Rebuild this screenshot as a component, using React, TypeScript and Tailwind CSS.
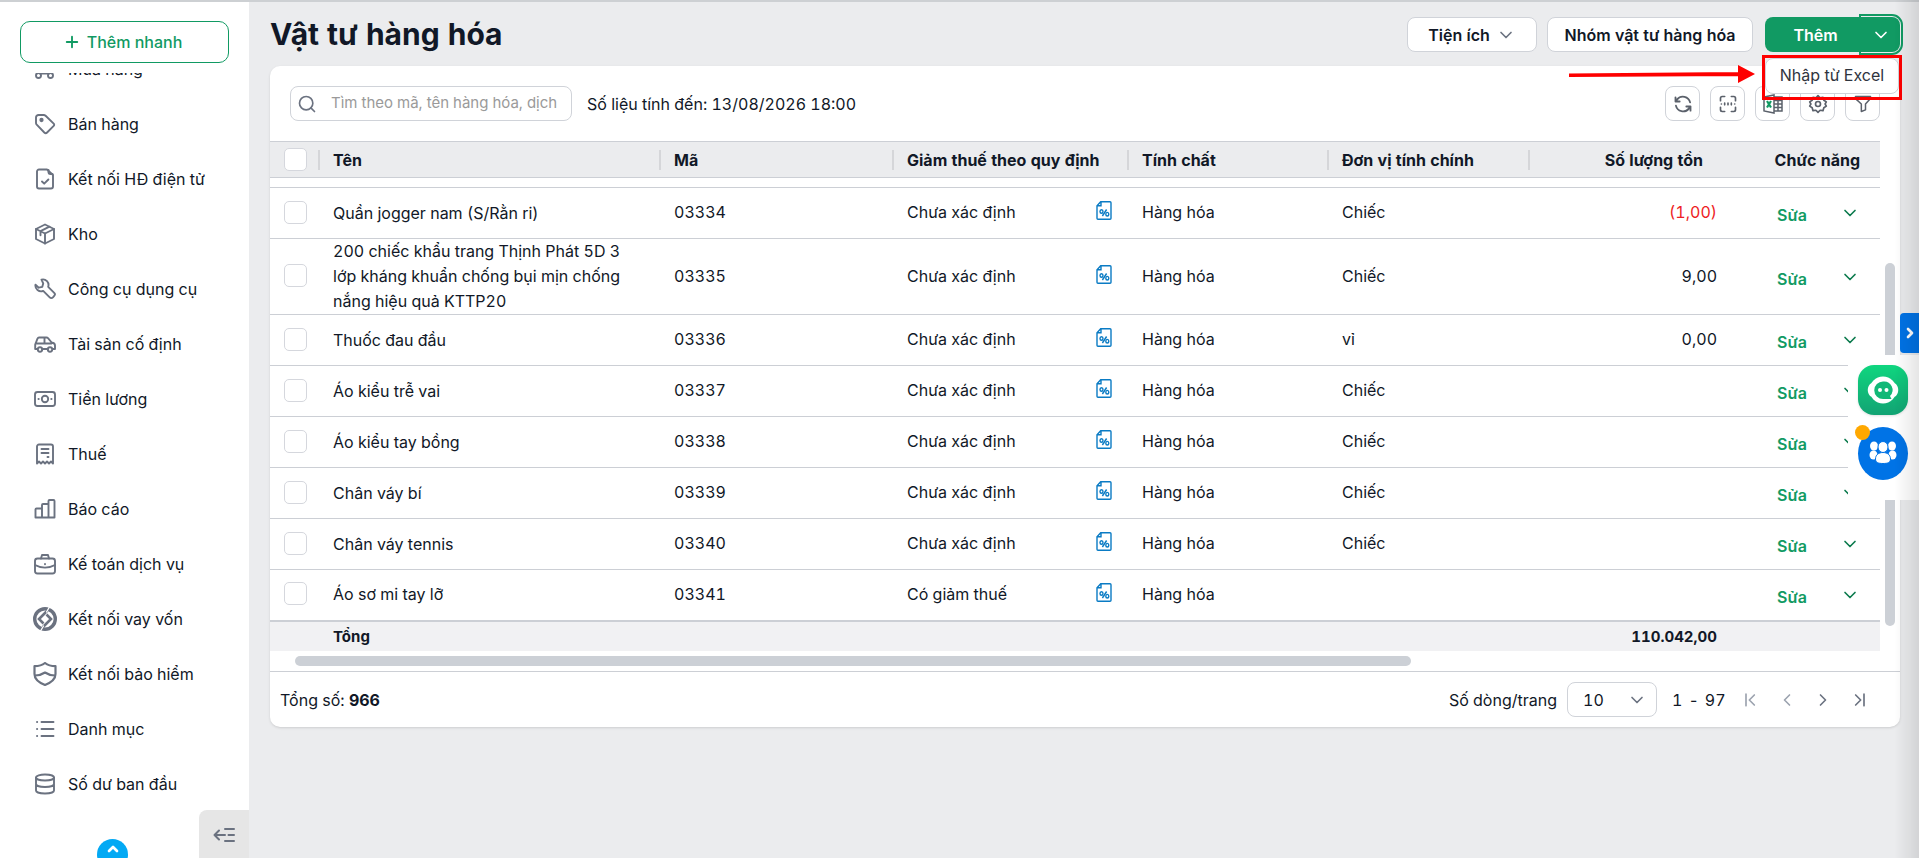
import { type ReactNode } from 'react';
import { ChevronDown, ChevronLeft, ChevronRight, ChevronUp, Plus, Search } from 'lucide-react';

type Item = {
  name: string;
  code: string;
  tax: string;
  unit: string;
  qty: string;
};

const items: Item[] = [
  { name: 'Quần jogger nam (S/Rằn ri)', code: '03334', tax: 'Chưa xác định', unit: 'Chiếc', qty: '(1,00)' },
  { name: '200 chiếc khẩu trang Thịnh Phát 5D 3 lớp kháng khuẩn chống bụi mịn chống nắng hiệu quả KTTP20', code: '03335', tax: 'Chưa xác định', unit: 'Chiếc', qty: '9,00' },
  { name: 'Thuốc đau đầu', code: '03336', tax: 'Chưa xác định', unit: 'vỉ', qty: '0,00' },
  { name: 'Áo kiểu trễ vai', code: '03337', tax: 'Chưa xác định', unit: 'Chiếc', qty: '' },
  { name: 'Áo kiểu tay bồng', code: '03338', tax: 'Chưa xác định', unit: 'Chiếc', qty: '' },
  { name: 'Chân váy bí', code: '03339', tax: 'Chưa xác định', unit: 'Chiếc', qty: '' },
  { name: 'Chân váy tennis', code: '03340', tax: 'Chưa xác định', unit: 'Chiếc', qty: '' },
  { name: 'Áo sơ mi tay lỡ', code: '03341', tax: 'Có giảm thuế', unit: '', qty: '' },
];

function Icon({ children, className = 'size-6' }: { children: ReactNode; className?: string }) {
  return (
    <svg
      viewBox="0 0 24 24"
      fill="none"
      stroke="currentColor"
      strokeWidth="1.9"
      strokeLinecap="round"
      strokeLinejoin="round"
      aria-hidden="true"
      className={className}
    >
      {children}
    </svg>
  );
}

const menu: { label: string; icon: ReactNode }[] = [
  {
    label: 'Mua hàng',
    icon: (
      <>
        <path d="M2 5h3l2.500 11h10l2-8H6" />
        <circle cx="5.500" cy="18.500" r="2.500" />
        <circle cx="17.500" cy="18.500" r="2.500" />
        <path d="M7.500 16.500h8" />
      </>
    ),
  },
  {
    label: 'Bán hàng',
    icon: (
      <>
        <path d="M3 5.500A2.500 2.500 0 0 1 5.500 3h5.300c.7 0 1.300.3 1.800.7l8.100 7.900a1.600 1.600 0 0 1 0 2.300l-6.600 6.600a2 2 0 0 1-2.800 0L3.700 12.700A2.400 2.400 0 0 1 3 11z" />
        <circle cx="8.500" cy="8" r="1.200" fill="currentColor" />
      </>
    ),
  },
  {
    label: 'Kết nối HĐ điện tử',
    icon: (
      <>
        <path d="M14 2.500H6a2 2 0 0 0-2 2v15a2 2 0 0 0 2 2h12a2 2 0 0 0 2-2V8z" />
        <path d="M15.500 3v2.500a1.500 1.500 0 0 0 1.500 1.500h2.500" />
        <path d="m9 14.500 2.200 2.200 4.200-4.200" />
      </>
    ),
  },
  {
    label: 'Kho',
    icon: (
      <>
        <path d="M12 2.500 3 7v10l9 4.500L21 17V7z" />
        <path d="m3 7 9 4.500L21 7M12 11.500v10M7.500 9.200l9-4.500M7.500 9.200v4" />
      </>
    ),
  },
  {
    label: 'Công cụ dụng cụ',
    icon: (
      <path d="M8.500 2.600a5.600 5.600 0 0 1 6.700 7.200l6 6a2.200 2.200 0 0 1 0 3.100l-1.300 1.500a2.200 2.200 0 0 1-3.200 0l-6.500-6.500a5.700 5.700 0 0 1-7.700-6.300l3.200 3.100 3.600-.9.900-3.400z" />
    ),
  },
  {
    label: 'Tài sản cố định',
    icon: (
      <>
        <path d="M4.500 17H2.200v-4.500L4.500 6.700C4.800 6 5.300 5.500 6 5.500h7.500c.6 0 1.100.2 1.500.7l3.700 4.300c2.100.4 3.300 1 3.300 3V17h-2M9 17h6M2.500 11.500h16M11.500 5.500v6" />
        <circle cx="7" cy="17.500" r="2.200" />
        <circle cx="17" cy="17.500" r="2.200" />
      </>
    ),
  },
  {
    label: 'Tiền lương',
    icon: (
      <>
        <rect x="2" y="5" width="20" height="14" rx="2.500" />
        <circle cx="12" cy="12" r="3.200" />
        <path d="M5.500 12h.2M18.300 12h.2" strokeWidth="2" />
      </>
    ),
  },
  {
    label: 'Thuế',
    icon: (
      <>
        <path d="M4 21.500v-17a2 2 0 0 1 2-2h12a2 2 0 0 1 2 2v17l-2-2-2 2-2-2-2 2-2-2-2 2-2-2z" />
        <path d="M8.500 7h7M8.500 11h7M14.500 15h1" />
      </>
    ),
  },
  {
    label: 'Báo cáo',
    icon: <path d="M2.500 20.500v-8a1 1 0 0 1 1-1H9V8a1 1 0 0 1 1-1h5.500V4a1 1 0 0 1 1-1h4a1 1 0 0 1 1 1v16.500zM9 11.500v9M15.500 7v13.500" />,
  },
  {
    label: 'Kế toán dịch vụ',
    icon: (
      <>
        <rect x="2" y="6.500" width="20" height="15" rx="2.500" />
        <path d="M8 6.500 9 3h6l1 3.500M2 13c6 3.500 14 3.500 20 0M12 12v.2" />
      </>
    ),
  },
  {
    label: 'Kết nối vay vốn',
    icon: (
      <>
        <circle cx="12" cy="12" r="10.300" strokeWidth="3.400" />
        <path d="M14.500 3.500 6 12l4.500 4.500M9.500 20.500 18 12l-4.500-4.500" strokeWidth="2.600" strokeLinecap="butt" strokeLinejoin="miter" />
        <path d="m16.500 0-3 5M7.500 24l3-5" stroke="white" strokeWidth="1.300" />
      </>
    ),
  },
  {
    label: 'Kết nối bảo hiểm',
    icon: (
      <>
        <path d="M12 1c2.700 2.200 6 3.200 10.500 3.200V12c0 5-5 8.800-10.500 11C6.500 20.800 1.500 17 1.500 12V4.200C6 4.200 9.300 3.200 12 1z" strokeWidth="2.200" />
        <path d="M2 13.500C6 13.500 9 12.500 12 10.500c3 2 6 3 10 3" strokeWidth="2.200" />
      </>
    ),
  },
  {
    label: 'Danh mục',
    icon: (
      <>
        <path d="M8.500 5h12M8.500 12h12M8.500 19h12" />
        <path d="M4 5h.2M4 12h.2M4 19h.2" />
      </>
    ),
  },
  {
    label: 'Số dư ban đầu',
    icon: (
      <>
        <ellipse cx="12" cy="5.500" rx="9" ry="3" />
        <path d="M3 5.500v13c0 1.700 4 3 9 3s9-1.300 9-3v-13M3 12c0 1.700 4 3 9 3s9-1.300 9-3" />
      </>
    ),
  },
];

const checkboxClass =
  'block size-[23px] appearance-none rounded-[5px] border border-[#d5d7dd] bg-white checked:bg-[#119a63]';

function TaxIcon() {
  return (
    <svg viewBox="0 0 16 19" fill="none" stroke="#0a7bc4" strokeWidth="1.400" className="mb-[3px] h-[19px] w-4 shrink-0" aria-hidden="true">
      <path d="M4.700.7H14a1 1 0 0 1 1 1v15.600a1 1 0 0 1-1 1H2a1 1 0 0 1-1-1V4.700zM5 .7v4H1" />
      <path d="m10.600 8.500-4.200 6.500" />
      <ellipse cx="5.500" cy="10.500" rx="1.500" ry="1.800" />
      <ellipse cx="11.300" cy="13.200" rx="1.500" ry="1.800" />
    </svg>
  );
}

function Sidebar() {
  return (
    <aside className="relative flex w-[249px] shrink-0 flex-col bg-white">
      <div className="px-5 pt-[19px]">
        <button className="flex h-[42px] w-[209px] items-center justify-center gap-[6px] rounded-[10px] border border-[#119a63] pr-1 text-base font-medium text-[#119a63]">
          <Plus className="size-[18px]" strokeWidth={2.5} />
          Thêm nhanh
        </button>
      </div>
      <nav className="mt-[10px] overflow-hidden">
        <ul className="-mt-8">
          {menu.map((m) => (
            <li key={m.label}>
              <a href="#" className="flex h-[55px] items-center gap-[11px] pl-[33px] text-base text-[#111827]">
                <span className="flex w-6 justify-center text-[#6b7280]">
                  <Icon>{m.icon}</Icon>
                </span>
                {m.label}
              </a>
            </li>
          ))}
        </ul>
      </nav>
      <button aria-label="Cuộn lên" className="absolute -bottom-3 left-[97px] flex size-[31px] items-start justify-center rounded-full bg-[#03a9f4] pt-[2px] text-white">
        <ChevronUp className="size-4" strokeWidth={4} />
      </button>
      <button aria-label="Thu gọn" className="absolute right-0 bottom-0 flex h-12 w-[50px] items-center justify-center rounded-tl-lg bg-[#e6e6e6] pt-[2px] text-[#6b7280]">
        <Icon>
          <path d="M7 7.500 2.500 12 7 16.500M2.500 12H13M13 6h9M16.500 12H22M13 18h9" strokeWidth="2" />
        </Icon>
      </button>
    </aside>
  );
}

function ToolButton({ label, children }: { label: string; children: ReactNode }) {
  return (
    <button aria-label={label} className="flex size-[35px] items-center justify-center rounded-lg border border-[#d0d3d9] bg-white text-[#5b616b]">
      {children}
    </button>
  );
}

function PageHeader() {
  return (
    <header className="flex h-16 items-start justify-between pt-[15px]">
      <h1 className="text-3xl leading-[35px] font-bold">Vật tư hàng hóa</h1>
      <div className="flex text-base font-semibold">
        <button className="mr-[10px] flex h-[35px] w-[130px] items-center justify-center gap-[6px] rounded-lg border border-[#d0d3d9] bg-white">
          Tiện ích
          <ChevronDown className="size-5 text-[#6b7280]" />
        </button>
        <button className="mr-3 h-[35px] w-[206px] rounded-lg border border-[#d0d3d9] bg-white">
          Nhóm vật tư hàng hóa
        </button>
        <div className="relative flex">
          <button className="h-[35px] w-[97px] rounded-l-lg bg-[#119a63] pl-1 text-white">Thêm</button>
          <button aria-label="Mở menu Thêm" className="flex h-[35px] w-[38px] items-center justify-center rounded-r-lg bg-[#119a63] text-white outline-2 outline-offset-1 outline-[#119a63]">
            <ChevronDown className="size-5" />
          </button>
          <div className="absolute -right-[2px] top-[38px] z-20 h-[45px] w-[140px] border-[3px] border-[#fe0000]">
            <button className="h-[36px] w-full rounded-lg border border-[#d0d3d9] bg-white pb-[2px] text-base font-normal whitespace-nowrap text-[#2f343e]">
              Nhập từ Excel
            </button>
          </div>
          <svg viewBox="0 0 186 18" className="absolute right-[145px] top-[48px] z-20 h-[18px] w-[186px]" fill="#fe0000" aria-hidden="true">
            <path d="M0 8.500 169 7v4L0 12zM169 0l17 9-17 9z" />
          </svg>
        </div>
      </div>
    </header>
  );
}

function Toolbar() {
  return (
    <div className="flex h-[75px] items-center pr-5 pl-5">
      <label className="flex h-[35px] w-[282px] items-center rounded-lg border border-[#d0d3d9] pl-[6px]">
        <Search className="size-5 shrink-0 text-[#6b7280]" />
        <input
          aria-label="Tìm kiếm"
          placeholder="Tìm theo mã, tên hàng hóa, dịch"
          className="mr-[10px] ml-[14px] w-full min-w-0 text-[15px] outline-none placeholder:text-[#9a9a9a]"
        />
      </label>
      <p className="ml-[15px] grow">Số liệu tính đến: 13/08/2026 18:00</p>
      <div className="flex gap-[10px]">
        <ToolButton label="Tải lại">
          <Icon className="size-5">
            <path d="M20.500 10a8.800 8.800 0 0 0-15.500-3.500L3 9M3 4v5h5M3.500 14a8.800 8.800 0 0 0 15.500 3.500l2-2.500M21 20v-5h-5" strokeWidth="2.200" />
          </Icon>
        </ToolButton>
        <ToolButton label="Quét mã">
          <Icon className="size-5">
            <path d="M3 8V5a2 2 0 0 1 2-2h3M16 3h3a2 2 0 0 1 2 2v3M21 16v3a2 2 0 0 1-2 2h-3M8 21H5a2 2 0 0 1-2-2v-3M4 12h.1M8 11v2M12 11v2M16 11v2M20 12h.1" strokeWidth="2" />
          </Icon>
        </ToolButton>
        <ToolButton label="Xuất Excel">
          <svg viewBox="0 0 20 20" className="size-5" aria-hidden="true">
            <path d="M11 3h8v14h-8M11 6.500h8M11 10h8M11 13.500h8M15 3v14" fill="none" stroke="#5b616b" strokeWidth="1.500" />
            <path d="M1 3 11 1v18L1 17z" fill="white" stroke="#5b616b" strokeWidth="1.500" />
            <path d="m4 7 4 6.500M8 7l-4 6.500" stroke="#119a63" strokeWidth="2.200" />
          </svg>
        </ToolButton>
        <ToolButton label="Thiết lập">
          <Icon className="size-5">
            <path d="m12 2 2.500 2.500L18 4l1 3.500 3 2L20.500 12l1.500 2.500-3 2L18 20l-3.500-.5L12 22l-2.500-2.500L6 20l-1-3.500-3-2L3.500 12 2 9.500l3-2L6 4l3.500.5z" strokeWidth="2" />
            <circle cx="12" cy="12" r="3" strokeWidth="2" />
          </Icon>
        </ToolButton>
        <ToolButton label="Bộ lọc">
          <Icon className="size-5">
            <path d="M3 3h18v2.500L15 12v7l-5 2v-9L3 5.500z" strokeWidth="1.800" />
          </Icon>
        </ToolButton>
      </div>
    </div>
  );
}

function HeadCell({ children }: { children: ReactNode }) {
  return (
    <th className="p-0 text-left font-bold">
      <div className="flex h-5 items-center border-r-2 border-[#d5d6d9] pl-[13px]">{children}</div>
    </th>
  );
}

function ItemTable() {
  return (
    <div className="relative pr-5">
      <table className="w-full table-fixed border-collapse">
        <colgroup>
          <col className="w-[50px]" />
          <col />
          <col className="w-[233px]" />
          <col className="w-[235px]" />
          <col className="w-[200px]" />
          <col className="w-[201px]" />
          <col className="w-[201px]" />
          <col className="w-[149px]" />
        </colgroup>
        <thead>
          <tr className="h-9 border-y border-[#cccfd5] bg-[#ebecee]">
            <th className="p-0">
              <div className="flex h-5 items-center border-r-2 border-[#d5d6d9] pl-[14px]">
                <input type="checkbox" aria-label="Chọn tất cả" className={checkboxClass} />
              </div>
            </th>
            <HeadCell>Tên</HeadCell>
            <HeadCell>Mã</HeadCell>
            <HeadCell>Giảm thuế theo quy định</HeadCell>
            <HeadCell>Tính chất</HeadCell>
            <HeadCell>Đơn vị tính chính</HeadCell>
            <th className="p-0 pr-7 text-right font-bold">Số lượng tồn</th>
            <th className="p-0 pr-5 text-right font-bold">Chức năng</th>
          </tr>
        </thead>
        <tbody>
          {/* tail of the row scrolled under the header */}
          <tr className="h-[10px] border-b border-[#cccfd5]">
            <td colSpan={8} className="p-0" />
          </tr>
          {items.map((item) => (
            <tr key={item.code} className="h-[51px] border-b border-[#cccfd5] last:border-b-2">
              <td className="p-0 pb-[2px] pl-[14px]">
                <input type="checkbox" aria-label={'Chọn ' + item.code} className={checkboxClass} />
              </td>
              <td className="p-0 pr-6 pl-[13px] leading-[25px]">{item.name}</td>
              <td className="p-0 pb-[2px] pl-[13px]">{item.code}</td>
              <td className="p-0 pr-[17px] pb-[2px] pl-[13px]">
                <div className="flex items-center justify-between">
                  {item.tax}
                  <TaxIcon />
                </div>
              </td>
              <td className="p-0 pb-[2px] pl-[13px]">Hàng hóa</td>
              <td className="p-0 pb-[2px] pl-[13px]">{item.unit}</td>
              <td className={item.qty.startsWith('(') ? 'p-0 pr-[14px] pb-[2px] text-right text-[#ee1d24]' : 'p-0 pr-[14px] pb-[2px] text-right'}>
                {item.qty}
              </td>
              <td className="p-0">
                <div className="flex items-center justify-between pt-1 pr-5 pl-[46px] text-[#119a63]">
                  <a href="#" className="font-semibold">Sửa</a>
                  <button aria-label="Thao tác khác" className="pb-1">
                    <ChevronDown className="size-5 text-[#0b7a4d]" />
                  </button>
                </div>
              </td>
            </tr>
          ))}
        </tbody>
        <tfoot>
          <tr className="h-[30px] bg-[#f1f1f3] text-[15px] font-bold">
            <td />
            <td className="p-0 pt-[2px] pl-[13px]">Tổng</td>
            <td colSpan={4} />
            <td className="p-0 pt-[2px] pr-[14px] text-right">110.042,00</td>
            <td />
          </tr>
        </tfoot>
      </table>
      {/* vertical scroll thumb */}
      <div className="absolute right-[5px] bottom-[25px] h-[363px] w-[10px] rounded-full bg-[#ccd0d6]" />
    </div>
  );
}

function Pager() {
  return (
    <footer className="flex h-14 items-center border-t border-[#cccfd5] pt-px pr-[31px] pl-[10px]">
      <p className="grow">
        Tổng số: <b>966</b>
      </p>
      <label htmlFor="page-size">Số dòng/trang</label>
      <div className="relative ml-[10px]">
        <select id="page-size" defaultValue="10" className="h-[35px] w-[90px] appearance-none rounded-lg border border-[#d0d3d9] bg-white pl-[15px]">
          <option>10</option>
          <option>20</option>
          <option>50</option>
        </select>
        <ChevronDown className="pointer-events-none absolute top-2 right-[10px] size-5 text-[#6b7280]" />
      </div>
      <p className="ml-[15px] flex w-[69px] gap-[6px]">
        <span>1</span>
        <span>-</span>
        <span>97</span>
      </p>
      <div className="flex gap-4 text-[#6b7280]">
        <button aria-label="Trang đầu" className="text-[#9ca3af]">
          <Icon className="size-5">
            <path d="M6 5v14M16 6l-6 6 6 6" strokeWidth="2" />
          </Icon>
        </button>
        <button aria-label="Trang trước" className="text-[#9ca3af]"><ChevronLeft className="size-5" /></button>
        <button aria-label="Trang sau"><ChevronRight className="size-5" /></button>
        <button aria-label="Trang cuối">
          <Icon className="size-5">
            <path d="M18 5v14M8 6l6 6-6 6" strokeWidth="2" />
          </Icon>
        </button>
      </div>
    </footer>
  );
}

function FloatingHelp() {
  return (
    <>
      <button aria-label="Mở bảng bên" className="fixed top-[313px] right-0 z-10 flex h-10 w-[19px] items-center justify-center rounded-l bg-[#0073e6] text-white">
        <ChevronRight className="size-4" strokeWidth={4} />
      </button>
      <div className="fixed top-[355px] right-0 z-10 flex h-[145px] w-[71px] flex-col gap-3 bg-white pt-[10px] pl-[10px]">
        <button aria-label="Trợ lý" className="size-[50px] rounded-2xl bg-linear-to-b from-[#0fd67f] to-[#12a373] shadow-sm">
          <svg viewBox="0 0 50 50" className="size-[50px]" aria-hidden="true">
            <circle cx="25" cy="25" r="13.500" fill="white" />
            <path d="M13.500 18c-5 3-5 11 0 14zM36.500 18c5 3 5 11 0 14z" fill="white" />
            <path d="M25 16.500a8.500 8.500 0 1 0 0 17.500h8.500l-1.500-3A8.500 8.500 0 0 0 25 16.500z" fill="#11b877" />
            <circle cx="22" cy="25" r="2" fill="white" />
            <circle cx="28.500" cy="25" r="2" fill="white" />
          </svg>
        </button>
        <button aria-label="Cộng đồng" className="relative h-[53px] w-[50px] rounded-[50%] bg-[#0073e6]">
          <svg viewBox="0 0 50 53" className="h-[53px] w-[50px]" fill="white" aria-hidden="true">
            <ellipse cx="16" cy="19" rx="4" ry="4.500" />
            <ellipse cx="34" cy="19" rx="4" ry="4.500" />
            <ellipse cx="15.500" cy="28" rx="4" ry="4.500" />
            <ellipse cx="34.500" cy="28" rx="4" ry="4.500" />
            <ellipse cx="25" cy="20" rx="5" ry="5.500" stroke="#0073e6" />
            <path d="M17.500 32c0-4 3-6.500 7.500-6.500s7.500 2.500 7.500 6.500c0 3.500-2.500 4.500-7.500 4.500s-7.500-1-7.500-4.500z" stroke="#0073e6" />
          </svg>
          <span className="absolute -top-[2px] -left-[3px] size-[15px] rounded-full bg-[#ffa800]" />
        </button>
      </div>
    </>
  );
}

export default function App() {
  return (
    <div className="flex h-screen overflow-hidden border-t-2 border-[#cdd0d3] bg-[#ebecee] font-['Inter',sans-serif] text-base text-[#111827] tabular-nums">
      <Sidebar />
      <main className="min-w-0 grow pr-[19px] pl-[21px]">
        <PageHeader />
        <section className="rounded-[10px] bg-white shadow-sm">
          <Toolbar />
          <ItemTable />
          <div className="h-5 pt-[5px] pr-[33px] pl-[25px]">
            <div className="h-[10px] w-[71%] rounded-full bg-[#ccd0d6]" />
          </div>
          <Pager />
        </section>
      </main>
      <FloatingHelp />
      <div className="pointer-events-none fixed inset-y-0 right-0 z-20 w-6 bg-linear-to-r from-transparent to-black/10" />
    </div>
  );
}
